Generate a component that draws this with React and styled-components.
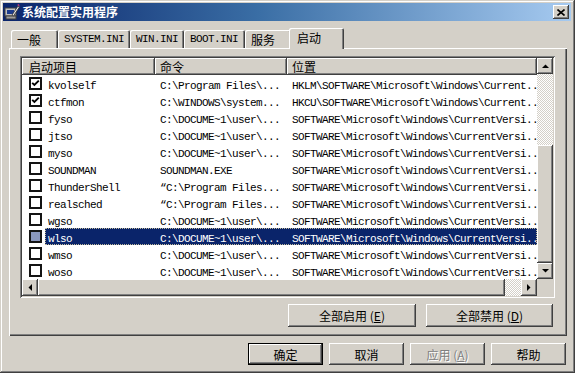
import styled, { createGlobalStyle, css } from "styled-components";

const GlobalStyle = createGlobalStyle`
  html, body {
    margin: 0;
    background: #fff;
  }
  body {
    font-family: "Noto Sans CJK SC", sans-serif;
    font-size: 12px;
    color: #000;
  }
`

const raised = css`
  box-shadow: inset -1px -1px #404040, inset 1px 1px #fff, inset -2px -2px #808080, inset 2px 2px #d4d0c8;
`

const Window = styled.div`
  width: 575px;
  height: 373px;
  box-sizing: border-box;
  background: #d4d0c8;
  padding: 3px 4px 4px 3px;
  box-shadow: inset -1px -1px #404040, inset 1px 1px #d4d0c8, inset -2px -2px #808080, inset 2px 2px #fff;
  display: flex;
  flex-direction: column;
`

const TitleBar = styled.div`
  height: 18px;
  display: flex;
  align-items: center;
  padding-left: 1px;
  background: linear-gradient(90deg, #0a246a 0%, #3a6ea5 45%, #a6caf0 100%);
  color: #fff;
`

const TitleText = styled.span`
  flex: 1;
  margin-left: 2px;
  font-weight: 700;
  font-size: 12px;
  line-height: 18px;
`

const CloseBtn = styled.div`
  width: 16px;
  height: 14px;
  margin-right: 2px;
  background: #d4d0c8;
  ${raised};
  display: flex;
  align-items: center;
  justify-content: center;
`

const TabStrip = styled.div`
  margin-top: 7px;
  margin-left: 8px;
  height: 20px;
  display: flex;
  align-items: flex-end;
  position: relative;
  z-index: 1;
`

const Tab = styled.div`
  width: ${(p) => p.$w}px;
  height: 18px;
  box-sizing: border-box;
  padding-left: 6px;
  display: flex;
  align-items: center;
  background: #d4d0c8;
  border-radius: 2px 2px 0 0;
  box-shadow: inset 1px 1px #fff, inset -1px 0 #404040, inset -2px 0 #808080;
  white-space: nowrap;

  ${(p) =>
    p.$active &&
    css`
      width: ${p.$w + 4}px;
      height: 21px;
      margin: 0 -2px -1px;
      padding-left: 8px;
      padding-bottom: 2px;
      position: relative;
      z-index: 2;
    `}
`

const Panel = styled.div`
  margin-left: 6px;
  width: 558px;
  height: 288px;
  box-sizing: border-box;
  padding: 8px 12px 0 11px;
  box-shadow: inset 1px 1px #fff, inset -1px -1px #404040, inset -2px -2px #808080;
  display: flex;
  flex-direction: column;
`

const ListFrame = styled.div`
  width: 535px;
  height: 242px;
  box-sizing: border-box;
  padding: 2px;
  background: #fff;
  box-shadow: inset 1px 1px #808080, inset -1px -1px #fff, inset 2px 2px #404040, inset -2px -2px #d4d0c8;
  display: grid;
  grid-template-columns: 515px 16px;
  grid-template-rows: 221px 17px;
`

const ListBody = styled.div`
  overflow: hidden;
  background: #fff;
`

const HeaderRow = styled.div`
  height: 17px;
  display: grid;
  grid-template-columns: 133px 132px 1fr;
  background: #d4d0c8;
`

const HeaderCell = styled.div`
  padding-left: ${(p) => p.$pad}px;
  display: flex;
  align-items: center;
  ${raised};
  box-shadow: inset -1px -1px #404040, inset 1px 1px #fff, inset -2px -2px #808080;
  white-space: nowrap;
`

const Row = styled.div`
  height: 17px;
  display: flex;
  align-items: center;
`

const CheckSlot = styled.div`
  width: 23px;
  height: 17px;
  display: flex;
  align-items: center;
  padding-left: 7px;
  box-sizing: border-box;
`

const CheckBox = styled.div`
  width: 13px;
  height: 13px;
  box-sizing: border-box;
  border: 2px solid #141414;
  background: ${(p) => (p.$sel ? "#8a97bd" : "#fff")};
  display: flex;
  align-items: center;
  justify-content: center;
`

const RowBody = styled.div`
  flex: 1;
  height: 17px;
  display: grid;
  grid-template-columns: 110px 132px 1fr;
  align-items: center;
  box-sizing: border-box;
  ${(p) =>
    p.$sel &&
    css`
      background: #0a246a;
      color: #fff;
      outline: 1px dotted rgba(255, 236, 170, 0.75);
      outline-offset: -1px;
    `}
`

const Cell = styled.div`
  padding-left: ${(p) => p.$pad}px;
  white-space: nowrap;
  overflow: hidden;
`

const Mono = styled.span`
  font-family: "Liberation Mono", "Noto Sans CJK SC", monospace;
  font-size: 11px;
  letter-spacing: -0.6px;
`

const VScroll = styled.div`
  grid-row: 1;
  grid-column: 2;
  display: flex;
  flex-direction: column;
`

const HScroll = styled.div`
  display: flex;
`

const ScrollBtn = styled.div`
  width: 16px;
  height: ${(p) => (p.$h ? p.$h : 16)}px;
  flex: none;
  background: #d4d0c8;
  ${raised};
  display: flex;
  align-items: center;
  justify-content: center;
`

const Track = styled.div`
  flex: ${(p) => p.$grow || 1};
  ${(p) => (p.$size ? `flex: none; ${p.$vertical ? "height" : "width"}: ${p.$size}px;` : "")}
  background-color: #fff;
  background-image: repeating-conic-gradient(#d4d0c8 0 25%, #fff 0 50%);
  background-size: 2px 2px;
`

const Thumb = styled.div`
  flex: none;
  ${(p) => (p.$vertical ? `height: ${p.$size}px;` : `width: ${p.$size}px;`)}
  background: #d4d0c8;
  ${raised};
`

const Corner = styled.div`
  background: #d4d0c8;
`

const ButtonRow = styled.div`
  display: flex;
  justify-content: flex-end;
  gap: ${(p) => p.$gap}px;
  margin-top: ${(p) => p.$top}px;
  padding-right: ${(p) => p.$right}px;
`

const Button = styled.div`
  width: ${(p) => p.$w}px;
  height: ${(p) => p.$h}px;
  box-sizing: border-box;
  background: #d4d0c8;
  display: flex;
  align-items: center;
  justify-content: center;
  white-space: nowrap;
  ${raised};
  color: ${(p) => (p.$disabled ? "#808080" : "#000")};
  text-shadow: ${(p) => (p.$disabled ? "1px 1px #fff" : "none")};

  ${(p) =>
    p.$default &&
    css`
      box-shadow: inset 0 0 0 1px #000, inset -2px -2px #404040, inset 2px 2px #fff, inset -3px -3px #808080;
    `}
`

const Key = styled.span`
  text-decoration: underline;
`

function TitleIcon() {
  return (
    <svg width="16" height="16" viewBox="0 0 16 16">
      <rect x="1" y="4" width="11" height="8" fill="#c0c0c0" stroke="#404040" strokeWidth="1" />
      <rect x="3" y="6" width="7" height="4" fill="#1c3c8c" />
      <rect x="2" y="12" width="10" height="3" fill="#9c9c9c" stroke="#404040" strokeWidth="1" />
      <path d="M8 11 L14 2 L15.5 3 L9.5 12 Z" fill="#e8e8e8" stroke="#303030" strokeWidth="0.8" />
      <path d="M13 1 L15 0 L15.6 2.6 Z" fill="#c83c78" />
    </svg>
  )
}

function CloseGlyph() {
  return (
    <svg width="8" height="7" viewBox="0 0 8 7">
      <path d="M0.5 0.5 L7.5 6.5 M7.5 0.5 L0.5 6.5" stroke="#000" strokeWidth="1.6" />
    </svg>
  )
}

function Arrow({ dir }) {
  const pts = {
    up: "0,4 7,4 3.5,0.5",
    down: "0,0 7,0 3.5,3.5",
    left: "4,0 4,7 0.5,3.5",
    right: "0,0 0,7 3.5,3.5",
  }[dir]
  const vertical = dir === "up" || dir === "down"
  return (
    <svg width={vertical ? 7 : 4} height={vertical ? 4 : 7} viewBox={vertical ? "0 0 7 4" : "0 0 4 7"}>
      <polygon points={pts} fill="#000" />
    </svg>
  )
}

function Check() {
  return (
    <svg width="9" height="9" viewBox="0 0 9 9">
      <path d="M1.2 3.8 L3.4 6 L7.8 1.6" stroke="#000" strokeWidth="1.9" fill="none" />
    </svg>
  )
}

const DOC = "C:\\DOCUME~1\\user\\..."
const SW = "SOFTWARE\\Microsoft\\Windows\\CurrentVersi..."

const items = [
  { name: "kvolself", cmd: "C:\\Program Files\\...", loc: "HKLM\\SOFTWARE\\Microsoft\\Windows\\Current...", on: true },
  { name: "ctfmon", cmd: "C:\\WINDOWS\\system...", loc: "HKCU\\SOFTWARE\\Microsoft\\Windows\\Current...", on: true },
  { name: "fyso", cmd: DOC, loc: SW },
  { name: "jtso", cmd: DOC, loc: SW },
  { name: "myso", cmd: DOC, loc: SW },
  { name: "SOUNDMAN", cmd: "SOUNDMAN.EXE", loc: SW },
  { name: "ThunderShell", cmd: "\u201cC:\\Program Files...", loc: SW },
  { name: "realsched", cmd: "\u201cC:\\Program Files...", loc: SW },
  { name: "wgso", cmd: DOC, loc: SW },
  { name: "wlso", cmd: DOC, loc: SW, sel: true },
  { name: "wmso", cmd: DOC, loc: SW },
  { name: "woso", cmd: DOC, loc: SW },
]

const tabs = [
  { label: "一般", w: 47 },
  { label: "SYSTEM.INI", w: 72, mono: true },
  { label: "WIN.INI", w: 54, mono: true },
  { label: "BOOT.INI", w: 61, mono: true },
  { label: "服务", w: 46 },
  { label: "启动", w: 51, active: true },
]

function App() {
  return (
    <>
      <GlobalStyle />
      <Window>
        <TitleBar>
          <TitleIcon />
          <TitleText>系统配置实用程序</TitleText>
          <CloseBtn>
            <CloseGlyph />
          </CloseBtn>
        </TitleBar>

        <TabStrip>
          {tabs.map((t) => (
            <Tab key={t.label} $w={t.w} $active={t.active}>
              {t.mono ? <Mono>{t.label}</Mono> : t.label}
            </Tab>
          ))}
        </TabStrip>

        <Panel>
          <ListFrame>
            <ListBody>
              <HeaderRow>
                <HeaderCell $pad={7}>启动项目</HeaderCell>
                <HeaderCell $pad={5}>命令</HeaderCell>
                <HeaderCell $pad={5}>位置</HeaderCell>
              </HeaderRow>
              {items.map((it) => (
                <Row key={it.name}>
                  <CheckSlot>
                    <CheckBox $sel={it.sel}>{it.on && <Check />}</CheckBox>
                  </CheckSlot>
                  <RowBody $sel={it.sel}>
                    <Cell $pad={3}>
                      <Mono>{it.name}</Mono>
                    </Cell>
                    <Cell $pad={5}>
                      <Mono>{it.cmd}</Mono>
                    </Cell>
                    <Cell $pad={5}>
                      <Mono>{it.loc}</Mono>
                    </Cell>
                  </RowBody>
                </Row>
              ))}
            </ListBody>

            <VScroll>
              <ScrollBtn>
                <Arrow dir="up" />
              </ScrollBtn>
              <Track $vertical />
              <Thumb $vertical $size={118} />
              <ScrollBtn>
                <Arrow dir="down" />
              </ScrollBtn>
            </VScroll>

            <HScroll>
              <ScrollBtn $h={17}>
                <Arrow dir="left" />
              </ScrollBtn>
              <Thumb $size={467} />
              <Track />
              <ScrollBtn $h={17}>
                <Arrow dir="right" />
              </ScrollBtn>
            </HScroll>
            <Corner />
          </ListFrame>

          <ButtonRow $gap={10} $top={6} $right={2}>
            <Button $w={128} $h={23}>
              全部启用 (<Key>E</Key>)
            </Button>
            <Button $w={127} $h={23}>
              全部禁用 (<Key>D</Key>)
            </Button>
          </ButtonRow>
        </Panel>

        <ButtonRow $gap={6} $top={7} $right={5}>
          <Button $w={75} $h={22} $default>
            确定
          </Button>
          <Button $w={75} $h={22}>
            取消
          </Button>
          <Button $w={75} $h={22} $disabled>
            应用 (<Key>A</Key>)
          </Button>
          <Button $w={75} $h={22}>
            帮助
          </Button>
        </ButtonRow>
      </Window>
    </>
  )
}

export default App
